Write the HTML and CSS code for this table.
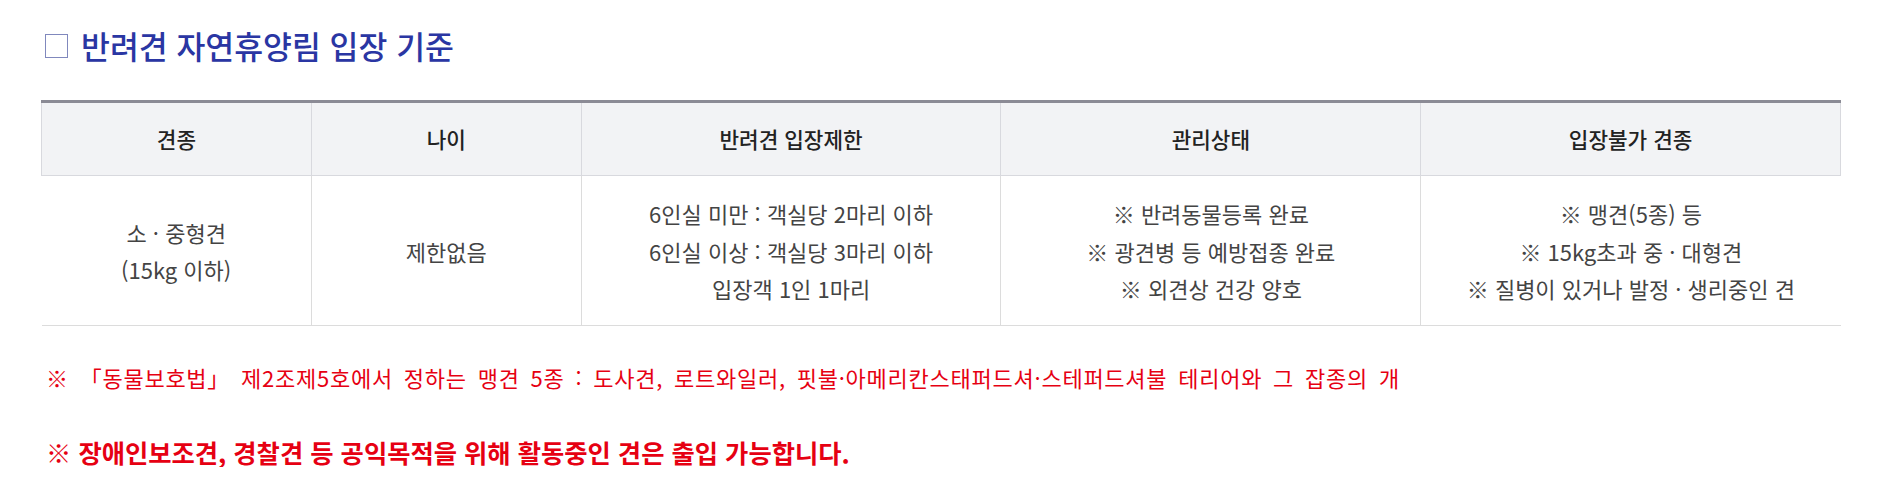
FILE: index.html
```html
<!DOCTYPE html>
<html lang="ko">
<head>
<meta charset="utf-8">
<title>반려견 자연휴양림 입장 기준</title>
<link rel="stylesheet" href="styles.css">
</head>
<body>
<div class="wrap">
  <h2 class="title"><span class="box"></span>반려견 자연휴양림 입장 기준</h2>
  <table class="tbl">
    <colgroup>
      <col class="c-narrow"><col class="c-narrow"><col class="c-wide"><col class="c-wide"><col class="c-wide">
    </colgroup>
    <thead>
      <tr>
        <th>견종</th>
        <th>나이</th>
        <th>반려견 입장제한</th>
        <th>관리상태</th>
        <th>입장불가 견종</th>
      </tr>
    </thead>
    <tbody>
      <tr>
        <td>소 · 중형견<br>(15kg 이하)</td>
        <td>제한없음</td>
        <td>6인실 미만 : 객실당 2마리 이하<br>6인실 이상 : 객실당 3마리 이하<br>입장객 1인 1마리</td>
        <td>※ 반려동물등록 완료<br>※ 광견병 등 예방접종 완료<br>※ 외견상 건강 양호</td>
        <td>※ 맹견(5종) 등<br>※ 15kg초과 중 · 대형견<br>※ 질병이 있거나 발정 · 생리중인 견</td>
      </tr>
    </tbody>
  </table>
  <p class="note">※ 「동물보호법」 제2조제5호에서 정하는 맹견 5종 : 도사견, 로트와일러, 핏불·아메리칸스태퍼드셔·스테퍼드셔불 테리어와 그 잡종의 개</p>
  <p class="note strong">※ 장애인보조견, 경찰견 등 공익목적을 위해 활동중인 견은 출입 가능합니다.</p>
</div>
</body>
</html>
```
FILE: styles.css
```css
html, body {
  margin: 0;
  padding: 0;
  background: #fff;
}
body {
  font-family: "Noto Sans CJK KR", "Noto Sans", sans-serif;
  color: #444;
}
.wrap {
  padding: 24px 44px 0 41px;
}
.title {
  display: flex;
  align-items: center;
  margin: 0;
  font-size: 31.4px;
  line-height: 44px;
  font-weight: 500;
  color: #2a36a3;
}
.box {
  width: 23px;
  height: 24px;
  border: 1.5px solid #8088bd;
  margin: 0 13px 0 4px;
  box-sizing: border-box;
}
.tbl {
  width: 1800px;
  margin-top: 32px;
  border-collapse: collapse;
  border-top: 3px solid #8b8b95;
  text-align: center;
}
.c-narrow { width: 15%; }
.c-wide { width: 23.33%; }
.tbl th {
  background: #f2f3f5;
  color: #222;
  font-size: 21.3px;
  line-height: 36px;
  font-weight: 500;
  padding: 18px 10px 18px;
  border: 1px solid #d8d9de;
  border-top: none;
}
.tbl td {
  font-size: 22px;
  line-height: 37.5px;
  padding: 19px 10px 17px;
  border-left: 1px solid #dcdcdc;
  border-right: 1px solid #dcdcdc;
  border-bottom: 1px solid #dcdcdc;
  color: #444;
}
.tbl td:first-child { border-left: none; }
.tbl td:last-child { border-right: none; }
.note {
  margin: 0;
  padding-left: 5px;
  color: #e60012;
  font-size: 22px;
  line-height: 30px;
}
.note:first-of-type {
  margin-top: 36px;
  word-spacing: 4px;
  letter-spacing: 0.75px;
}
.note.strong {
  margin-top: 45px;
  font-size: 25.3px;
  font-weight: 700;
}
```
